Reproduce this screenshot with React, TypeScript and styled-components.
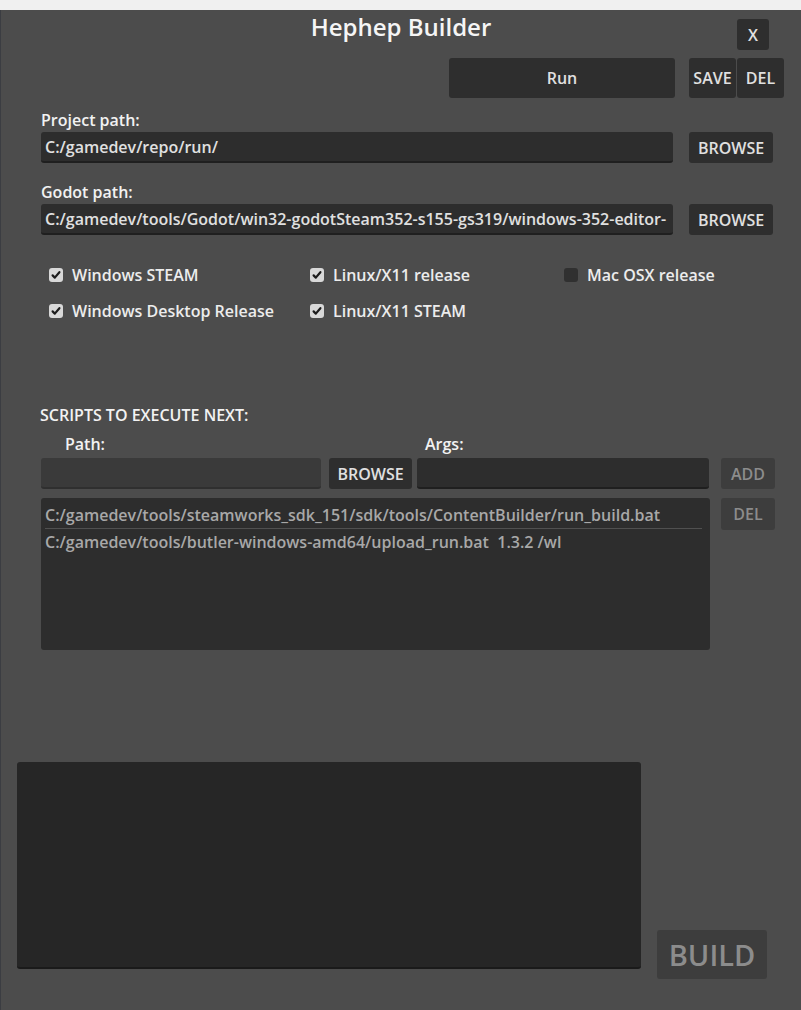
import styled, { createGlobalStyle } from "styled-components";

const GlobalStyle = createGlobalStyle`
  html, body {
    margin: 0;
    padding: 0;
    background: #4c4c4c;
  }
  * {
    box-sizing: border-box;
  }
`;

const FONT = `"Open Sans", "Noto Sans", "DejaVu Sans", sans-serif`;

const Page = styled.div`
  width: 801px;
  height: 1010px;
  display: flex;
  flex-direction: column;
  overflow: hidden;
  font-family: ${FONT};
  font-weight: 600;
  font-size: 16px;
  color: #f2f2f2;
`;

const TopStrip = styled.div`
  height: 10px;
  flex-shrink: 0;
  background: #f0f0f0;
`;

const Window = styled.div`
  flex: 1;
  display: flex;
  flex-direction: column;
  background: #4c4c4c;
  box-shadow: inset 1px 0 0 #3b3d42;
`;

const Header = styled.div`
  height: 48px;
  display: grid;
  grid-template-columns: 1fr auto 1fr;
`;

const Title = styled.div`
  grid-column: 2;
  font-size: 24px;
  line-height: 34px;
  color: #f5f5f5;
  padding-left: 1px;
`;

const Button = styled.button<{ $w: number; $h: number; $disabled?: boolean; $size?: number }>`
  width: ${(p) => p.$w}px;
  height: ${(p) => p.$h}px;
  flex-shrink: 0;
  border: none;
  border-radius: 3px;
  padding: 0;
  background: ${(p) => (p.$disabled ? "#3d3d3d" : "#2e2e2e")};
  color: ${(p) => (p.$disabled ? "#8c8c8c" : "#e0e0e0")};
  font-family: ${FONT};
  font-weight: 600;
  font-size: ${(p) => p.$size ?? 16}px;
  display: flex;
  align-items: center;
  justify-content: center;
`;

const CloseButton = styled(Button)`
  grid-column: 3;
  justify-self: end;
  margin-top: 9px;
  margin-right: 32px;
`;

const ActionRow = styled.div`
  display: flex;
  justify-content: flex-end;
  padding-right: 17px;
  height: 40px;
`;

const RunButton = styled(Button)`
  margin-right: 14px;
`;

const GlueButton = styled(Button)`
  margin-left: 1px;
`;

const Form = styled.div`
  display: flex;
  flex-direction: column;
  padding: 0 28px 0 41px;
`;

const FieldLabel = styled.div<{ $top: number }>`
  margin-top: ${(p) => p.$top}px;
  line-height: 22px;
`;

const FieldRow = styled.div`
  display: flex;
  gap: 16px;
  height: 31px;
  margin-top: 1px;
`;

const LineEdit = styled.div<{ $readOnly?: boolean; $w?: number }>`
  ${(p) => (p.$w ? `width: ${p.$w}px; flex-shrink: 0;` : "flex: 1;")}
  height: 31px;
  min-width: 0;
  background: ${(p) => (p.$readOnly ? "#3a3a3a" : "#2d2d2d")};
  border-bottom: 2px solid ${(p) => (p.$readOnly ? "#2f2f2f" : "#1f1f1f")};
  border-radius: 3px;
  padding: 0 4px;
  color: #e0e0e0;
  line-height: 30px;
  white-space: nowrap;
  overflow: hidden;
`;

const CheckGrid = styled.div`
  margin-top: 22px;
  padding-left: 8px;
  display: grid;
  grid-template-columns: 261px 254px 1fr;
  grid-auto-rows: 36px;
`;

const CheckItem = styled.label`
  display: flex;
  align-items: center;
  gap: 9px;
  color: #ececec;
  white-space: nowrap;
`;

const Box = styled.svg`
  width: 14px;
  height: 14px;
  flex-shrink: 0;
`;

const CheckBox = ({ label, checked }: { label: string; checked: boolean }) => (
  <CheckItem>
    <Box viewBox="0 0 14 14">
      {checked ? (
        <>
          <rect x="0" y="0" width="14" height="14" rx="3" fill="#d8d8d8" />
          <path
            d="M3.6 7.4 L5.8 9.6 L10.4 4.2"
            fill="none"
            stroke="#1c1c1c"
            strokeWidth="2.2"
            strokeLinecap="round"
            strokeLinejoin="round"
          />
        </>
      ) : (
        <rect x="0" y="0" width="14" height="14" rx="3" fill="#303030" />
      )}
    </Box>
    {label}
  </CheckItem>
);

const SectionTitle = styled.div`
  margin-top: 75px;
  margin-left: -1px;
  line-height: 22px;
`;

const SubLabels = styled.div`
  margin-top: 7px;
  display: flex;
  line-height: 22px;
`;

const SubLabel = styled.div<{ $w: number; $pad: number }>`
  width: ${(p) => p.$w}px;
  padding-left: ${(p) => p.$pad}px;
`;

const ScriptRow = styled.div`
  display: flex;
  height: 31px;
  margin-top: 3px;
`;

const Spaced = styled.div<{ $gap: number }>`
  margin-left: ${(p) => p.$gap}px;
  display: flex;
`;

const ListRow = styled.div`
  display: flex;
  align-items: flex-start;
  margin-top: 9px;
  gap: 11px;
`;

const ItemList = styled.div`
  width: 669px;
  height: 152px;
  flex-shrink: 0;
  background: #2d2d2d;
  border-radius: 3px;
  padding: 4px 8px 4px 4px;
`;

const ListItem = styled.div`
  line-height: 26px;
  color: #a8a8a8;
  white-space: pre;
  overflow: hidden;
  & + & {
    border-top: 1px solid #505050;
  }
`;

const BottomRow = styled.div`
  display: flex;
  align-items: flex-start;
  margin-top: 112px;
  padding-left: 17px;
  gap: 16px;
`;

const Output = styled.div`
  width: 624px;
  height: 207px;
  background: #262626;
  border-bottom: 2px solid #1a1a1a;
  border-radius: 3px;
`;

const BuildButton = styled(Button)`
  margin-top: 168px;
`;

const scripts = [
  "C:/gamedev/tools/steamworks_sdk_151/sdk/tools/ContentBuilder/run_build.bat",
  "C:/gamedev/tools/butler-windows-amd64/upload_run.bat  1.3.2 /wl",
];

export default function App() {
  return (
    <>
      <GlobalStyle />
      <Page>
        <TopStrip />
        <Window>
          <Header>
            <Title>Hephep Builder</Title>
            <CloseButton $w={32} $h={31}>
              X
            </CloseButton>
          </Header>
          <ActionRow>
            <RunButton $w={226} $h={40}>
              Run
            </RunButton>
            <Button $w={47} $h={40}>
              SAVE
            </Button>
            <GlueButton $w={47} $h={40}>
              DEL
            </GlueButton>
          </ActionRow>
          <Form>
            <FieldLabel $top={11}>Project path:</FieldLabel>
            <FieldRow>
              <LineEdit>C:/gamedev/repo/run/</LineEdit>
              <Button $w={84} $h={31}>
                BROWSE
              </Button>
            </FieldRow>
            <FieldLabel $top={18}>Godot path:</FieldLabel>
            <FieldRow>
              <LineEdit>
                C:/gamedev/tools/Godot/win32-godotSteam352-s155-gs319/windows-352-editor-
              </LineEdit>
              <Button $w={84} $h={31}>
                BROWSE
              </Button>
            </FieldRow>
            <CheckGrid>
              <CheckBox label="Windows STEAM" checked />
              <CheckBox label="Linux/X11 release" checked />
              <CheckBox label="Mac OSX release" checked={false} />
              <CheckBox label="Windows Desktop Release" checked />
              <CheckBox label="Linux/X11 STEAM" checked />
            </CheckGrid>
            <SectionTitle>SCRIPTS TO EXECUTE NEXT:</SectionTitle>
            <SubLabels>
              <SubLabel $w={376} $pad={24}>
                Path:
              </SubLabel>
              <SubLabel $w={300} $pad={8}>
                Args:
              </SubLabel>
            </SubLabels>
            <ScriptRow>
              <LineEdit $readOnly $w={280} />
              <Spaced $gap={8}>
                <Button $w={83} $h={31}>
                  BROWSE
                </Button>
              </Spaced>
              <Spaced $gap={5}>
                <LineEdit $w={292} />
              </Spaced>
              <Spaced $gap={12}>
                <Button $w={54} $h={31} $disabled>
                  ADD
                </Button>
              </Spaced>
            </ScriptRow>
            <ListRow>
              <ItemList>
                {scripts.map((s) => (
                  <ListItem key={s}>{s}</ListItem>
                ))}
              </ItemList>
              <Button $w={54} $h={32} $disabled>
                DEL
              </Button>
            </ListRow>
          </Form>
          <BottomRow>
            <Output />
            <BuildButton $w={110} $h={49} $disabled $size={29}>
              BUILD
            </BuildButton>
          </BottomRow>
        </Window>
      </Page>
    </>
  );
}
